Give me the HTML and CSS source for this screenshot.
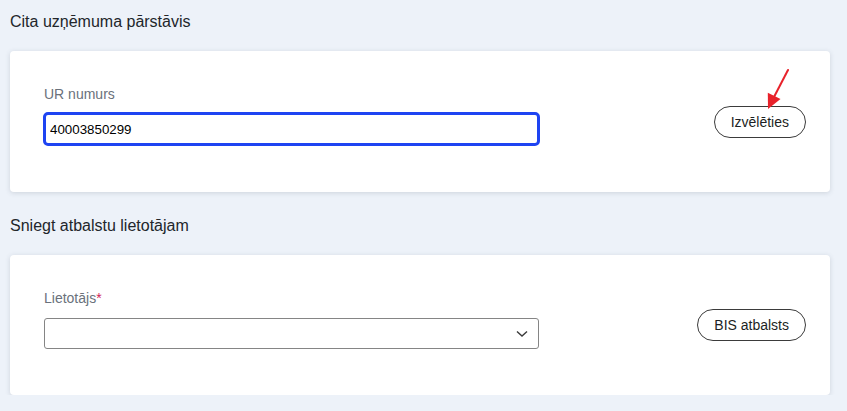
FILE: index.html
```html
<!DOCTYPE html>
<html lang="lv">

<head>
    <meta charset="UTF-8">
    <meta name="viewport" content="width=device-width, initial-scale=1.0">
    <title>Pārstāvis</title>
    <link rel="stylesheet" href="styles.css">
</head>

<body>
    <div class="page">
        <section class="section">
            <h2 class="section-title">Cita uzņēmuma pārstāvis</h2>
            <div class="card">
                <div class="field">
                    <label class="field-label" for="ur">UR numurs</label>
                    <input class="text-input focused" id="ur" type="text" value="40003850299">
                </div>
                <button class="pill-btn" type="button">Izvēlēties</button>

                <svg class="hint-arrow" width="40" height="50" viewBox="0 0 40 50">
                    <line x1="28" y1="4" x2="14" y2="31" stroke="#e8222b" stroke-width="2" stroke-linecap="round" />
                    <polygon points="8,43 20.5,33 7.8,26.8" fill="#e8222b" />
                </svg>
            </div>
        </section>

        <section class="section">
            <h2 class="section-title">Sniegt atbalstu lietotājam</h2>
            <div class="card">
                <div class="field">
                    <label class="field-label">Lietotājs<span class="req">*</span></label>
                    <div class="select-box">
                        <svg class="chevron" width="12" height="8" viewBox="0 0 12 8">
                            <polyline points="1,1.5 6,6 11,1.5" fill="none" stroke="#3a3a3a" stroke-width="1.4" />
                        </svg>
                    </div>
                </div>
                <button class="pill-btn" type="button">BIS atbalsts</button>
            </div>
        </section>
    </div>
</body>

</html>
```

FILE: styles.css
```css
        body {
            margin: 0;
            background: #edf2f9;
            font-family: "Liberation Sans", Arial, sans-serif;
            color: #1f2328;
        }

        .page {
            padding: 0 17px 0 10px;
        }

        .section + .section {
            margin-top: 12px;
        }

        .section-title {
            margin: 0;
            padding: 12px 0 19px;
            font-size: 16px;
            line-height: 20px;
            font-weight: normal;
            color: #22262b;
        }

        .card {
            position: relative;
            display: flex;
            justify-content: space-between;
            align-items: center;
            background: #fff;
            border-radius: 4px;
            box-shadow: 0 1px 5px rgba(60, 70, 90, 0.18);
            padding: 35px 24px 35px 34px;
        }

        .field {
            display: flex;
            flex-direction: column;
            width: 496px;
            padding-bottom: 11px;
        }

        .field-label {
            font-size: 14px;
            line-height: 16px;
            color: #6a717b;
            margin-bottom: 10px;
        }

        .req {
            color: #d1245a;
        }

        .text-input {
            box-sizing: border-box;
            height: 34px;
            margin-left: -1px;
            border: 1px solid #8a8a8a;
            border-radius: 4px;
            padding: 0 4px;
            font-family: "Liberation Sans", Arial, sans-serif;
            font-size: 13.33px;
            color: #000;
            outline: none;
        }

        .text-input.focused {
            border: 3px solid #1e44f2;
            border-radius: 5px;
        }

        .select-box {
            box-sizing: border-box;
            width: 495px;
            height: 31px;
            margin-top: 2px;
            border: 1px solid #858585;
            border-radius: 3px;
            display: flex;
            align-items: center;
            justify-content: flex-end;
            padding-right: 10px;
        }

        .chevron {
            display: block;
        }

        .pill-btn {
            box-sizing: border-box;
            height: 32px;
            padding: 0 16px;
            border: 1px solid #3b3b3b;
            border-radius: 16px;
            background: #fff;
            font-family: "Liberation Sans", Arial, sans-serif;
            font-size: 14px;
            color: #1c1f24;
            cursor: pointer;
        }

        .hint-arrow {
            position: absolute;
            left: 750px;
            top: 15px;
        }
```
